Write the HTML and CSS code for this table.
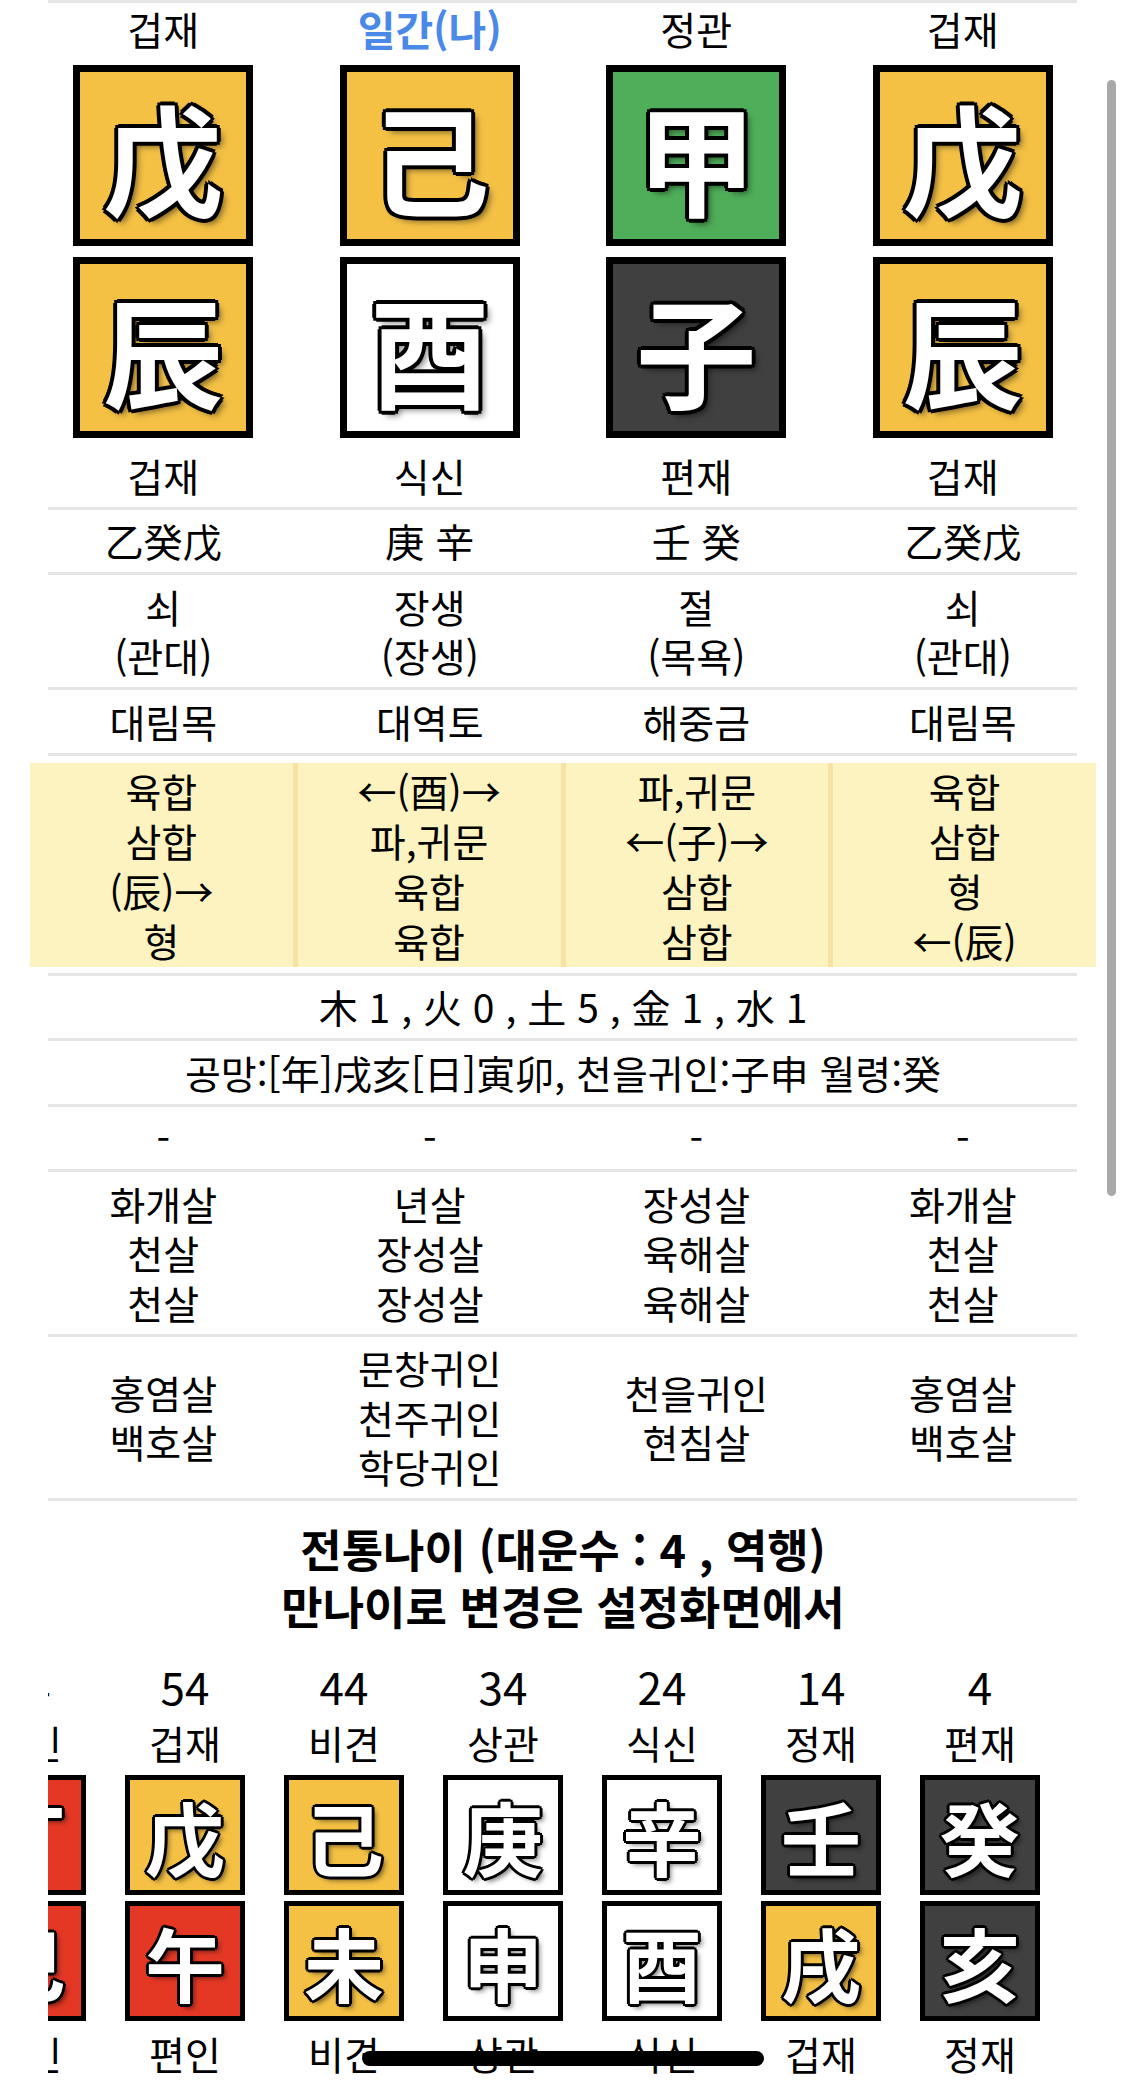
FILE: index.html
```html
<!DOCTYPE html>
<html lang="ko">
<head>
<meta charset="utf-8">
<title>사주</title>
<link rel="stylesheet" href="styles.css">
</head>
<body>
<div class="page">
  <div class="sep"></div>
  <div class="row head">
    <div>겁재</div><div class="me">일간(나)</div><div>정관</div><div>겁재</div>
  </div>
  <div class="pillars">
    <div class="pillar"><div class="box big earth">戊</div><div class="box big earth">辰</div></div>
    <div class="pillar"><div class="box big earth">己</div><div class="box big metal">酉</div></div>
    <div class="pillar"><div class="box big wood">甲</div><div class="box big water">子</div></div>
    <div class="pillar"><div class="box big earth">戊</div><div class="box big earth">辰</div></div>
  </div>
  <div class="row"><div>겁재</div><div>식신</div><div>편재</div><div>겁재</div></div>
  <div class="sep"></div>
  <div class="row"><div>乙癸戊</div><div>庚 辛</div><div>壬 癸</div><div>乙癸戊</div></div>
  <div class="sep"></div>
  <div class="row"><div>쇠<br>(관대)</div><div>장생<br>(장생)</div><div>절<br>(목욕)</div><div>쇠<br>(관대)</div></div>
  <div class="sep"></div>
  <div class="row"><div>대림목</div><div>대역토</div><div>해중금</div><div>대림목</div></div>
  <div class="sep"></div>
  <div class="row hap">
    <div>육합<br>삼합<br>(辰)→<br>형</div>
    <div>←(酉)→<br>파,귀문<br>육합<br>육합</div>
    <div>파,귀문<br>←(子)→<br>삼합<br>삼합</div>
    <div>육합<br>삼합<br>형<br>←(辰)</div>
  </div>
  <div class="sep"></div>
  <div class="row full"><div>木 1 , 火 0 , 土 5 , 金 1 , 水 1</div></div>
  <div class="sep"></div>
  <div class="row full"><div>공망:[年]戌亥[日]寅卯, 천을귀인:子申 월령:癸</div></div>
  <div class="sep"></div>
  <div class="row"><div>-</div><div>-</div><div>-</div><div>-</div></div>
  <div class="sep"></div>
  <div class="row"><div>화개살<br>천살<br>천살</div><div>년살<br>장성살<br>장성살</div><div>장성살<br>육해살<br>육해살</div><div>화개살<br>천살<br>천살</div></div>
  <div class="sep"></div>
  <div class="row"><div>홍염살<br>백호살</div><div>문창귀인<br>천주귀인<br>학당귀인</div><div>천을귀인<br>현침살</div><div>홍염살<br>백호살</div></div>
  <div class="sep"></div>

  <div class="title">전통나이 (대운수 : 4 , 역행)<br>만나이로 변경은 설정화면에서</div>

  <div class="dw">
    <div class="dcol"><div class="age">64</div><div class="lbl">편인</div><div class="box sm fire top">丁</div><div class="box sm fire">巳</div><div class="lbl bot">정인</div></div>
    <div class="dcol"><div class="age">54</div><div class="lbl">겁재</div><div class="box sm earth top">戊</div><div class="box sm fire">午</div><div class="lbl bot">편인</div></div>
    <div class="dcol"><div class="age">44</div><div class="lbl">비견</div><div class="box sm earth top">己</div><div class="box sm earth">未</div><div class="lbl bot">비견</div></div>
    <div class="dcol"><div class="age">34</div><div class="lbl">상관</div><div class="box sm metal top">庚</div><div class="box sm metal">申</div><div class="lbl bot">상관</div></div>
    <div class="dcol"><div class="age">24</div><div class="lbl">식신</div><div class="box sm metal top">辛</div><div class="box sm metal">酉</div><div class="lbl bot">식신</div></div>
    <div class="dcol"><div class="age">14</div><div class="lbl">정재</div><div class="box sm water top">壬</div><div class="box sm earth">戌</div><div class="lbl bot">겁재</div></div>
    <div class="dcol"><div class="age">4</div><div class="lbl">편재</div><div class="box sm water top">癸</div><div class="box sm water">亥</div><div class="lbl bot">정재</div></div>
  </div>
</div>
<div class="scroll-ind"></div>
<div class="home-ind"></div>
</body>
</html>
```

FILE: styles.css
```css
html, body {
  margin: 0;
  padding: 0;
  background: #fff;
  overflow: hidden;
}
body {
  width: 1125px;
  height: 2090px;
  position: relative;
  font-family: "Noto Sans CJK KR", "Noto Sans", sans-serif;
  color: #000;
}
.page {
  padding: 0 29px 0 30px;
}
.sep {
  height: 3px;
  background: #e6e6e6;
  margin: 0 19px 0 18px;
}
.row {
  display: grid;
  grid-template-columns: repeat(4, 1fr);
  align-items: center;
  text-align: center;
  font-size: 39px;
  line-height: 49.5px;
  padding: 6.5px 0;
  white-space: nowrap;
}
.row.full {
  grid-template-columns: 1fr;
}
.head {
  padding: 0;
  line-height: 50px;
}
.me {
  color: #4a89e8;
  font-weight: 700;
  font-size: 41px;
}
.pillars {
  display: grid;
  grid-template-columns: repeat(4, 1fr);
  margin: 12px 0 6px;
}
.pillar {
  display: flex;
  flex-direction: column;
  align-items: center;
  gap: 11px;
}
.box {
  box-sizing: border-box;
  border: 7px solid #000;
  display: flex;
  align-items: center;
  justify-content: center;
  color: #fff;
  font-family: "Noto Sans CJK KR", "Noto Sans CJK SC", sans-serif;
  font-weight: 700;
  text-shadow:
    -3px -3px 0 #000, 3px -3px 0 #000, -3px 3px 0 #000, 3px 3px 0 #000,
    0 -4px 0 #000, 0 4px 0 #000, -4px 0 0 #000, 4px 0 0 #000,
    5px 5px 6px rgba(0, 0, 0, 0.5);
}
.box.big {
  width: 180px;
  height: 181px;
  font-size: 120px;
  line-height: 1;
}
.box.sm {
  width: 120px;
  height: 120px;
  border-width: 5px;
  font-size: 80px;
  line-height: 1;
  text-shadow:
    -2px -2px 0 #000, 2px -2px 0 #000, -2px 2px 0 #000, 2px 2px 0 #000,
    0 -3px 0 #000, 0 3px 0 #000, -3px 0 0 #000, 3px 0 0 #000,
    4px 4px 5px rgba(0, 0, 0, 0.5);
}
.earth { background: #f4c145; }
.wood { background: #4fae5a; }
.water { background: #404040; }
.metal { background: #ffffff; }
.fire { background: #e43825; }

.hap {
  background: #f6e2a3;
  gap: 0 5px;
  margin: 7px 0 6px;
  padding: 0;
  line-height: 50px;
}
.hap > div {
  background: #fdf3c0;
  padding: 2px 0;
  align-self: stretch;
}

.title {
  text-align: center;
  font-weight: 700;
  font-size: 45px;
  line-height: 57px;
  margin-top: 18.5px;
  white-space: nowrap;
}

.dw {
  margin: 27.5px 19px 0 18px;
  padding-right: 17.5px;
  overflow: hidden;
  display: flex;
  justify-content: flex-end;
}
.dcol {
  flex: 0 0 159px;
  display: flex;
  flex-direction: column;
  align-items: center;
  text-align: center;
}
.age {
  font-size: 44px;
  line-height: 50px;
  margin-bottom: 6px;
}
.lbl {
  font-size: 39px;
  line-height: 50px;
  white-space: nowrap;
}
.box.top {
  margin-top: 8px;
  margin-bottom: 6px;
}
.lbl.bot {
  margin-top: 7px;
}

.scroll-ind {
  position: absolute;
  left: 1107px;
  top: 80px;
  width: 9px;
  height: 1116px;
  border-radius: 5px;
  background: #a9a9a9;
}
.home-ind {
  position: absolute;
  left: 362px;
  top: 2051px;
  width: 402px;
  height: 15px;
  border-radius: 8px;
  background: #000;
}
```
